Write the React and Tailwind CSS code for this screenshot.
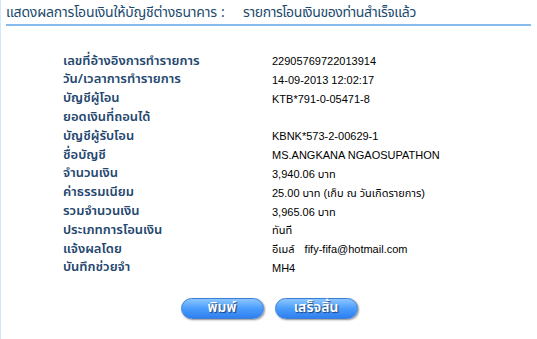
import React from "react";

const rows = [
  ["เลขที่อ้างอิงการทำรายการ", "22905769722013914"],
  ["วัน/เวลาการทำรายการ", "14-09-2013 12:02:17"],
  ["บัญชีผู้โอน", "KTB*791-0-05471-8"],
  ["ยอดเงินที่ถอนได้", ""],
  ["บัญชีผู้รับโอน", "KBNK*573-2-00629-1"],
  ["ชื่อบัญชี", "MS.ANGKANA NGAOSUPATHON"],
  ["จำนวนเงิน", "3,940.06 บาท"],
  ["ค่าธรรมเนียม", "25.00 บาท (เก็บ ณ วันเกิดรายการ)"],
  ["รวมจำนวนเงิน", "3,965.06 บาท"],
  ["ประเภทการโอนเงิน", "ทันที"],
  ["แจ้งผลโดย", "email"],
  ["บันทึกช่วยจำ", "MH4"],
];

const font = { fontFamily: "Tahoma, 'Noto Sans Thai', 'Liberation Sans', sans-serif" };
const valueFont = { fontFamily: "Tahoma, 'Liberation Sans', 'Noto Sans Thai', sans-serif" };

const PillButton = ({ children }) => (
  <button className="w-[83px] h-[21px] rounded-full border border-[#3b7fd9] bg-gradient-to-b from-[#8cc6ff] via-[#4a9dfb] to-[#2f7ff0] shadow-[1px_1px_2px_rgba(0,0,0,0.45)] text-white text-[14px] font-semibold leading-none [text-shadow:1px_1px_1px_#1b3f7a]">
    {children}
  </button>
);

export default function App() {
  return (
    <div className="w-[537px] h-[339px] bg-white border-l border-[#cfe8fb] overflow-hidden" style={font}>
      <div className="pl-[5px] pr-[6px] pt-[4px]">
        <div className="flex text-[14px] text-[#1b4a6e] leading-[17px] whitespace-nowrap">
          <span className="w-[215px] shrink-0 tracking-[-0.2px]">แสดงผลการโอนเงินให้บัญชีต่างธนาคาร</span>
          <span className="w-[22px] shrink-0">:</span>
          <span className="tracking-[-0.4px]">รายการโอนเงินของท่านสำเร็จแล้ว</span>
        </div>
        <div className="mt-[3px] h-[2px] bg-[#88bbf0]" />
      </div>

      <div className="pl-[62px] pt-[26px] flex flex-col">
        {rows.map(([label, value]) => (
          <div key={label} className="flex h-[18.8px] items-center">
            <div className="w-[209px] text-[13px] font-semibold text-[#23466e]">{label}</div>
            <div className="text-[11px] text-black" style={valueFont}>
              {value === "email" ? (
                <span>
                  อีเมล์<span className="ml-[10px]">fify-fifa@hotmail.com</span>
                </span>
              ) : (
                value
              )}
            </div>
          </div>
        ))}
      </div>

      <div className="flex justify-center gap-[11px] pt-[20px]">
        <PillButton>พิมพ์</PillButton>
        <PillButton>เสร็จสิ้น</PillButton>
      </div>
    </div>
  );
}
